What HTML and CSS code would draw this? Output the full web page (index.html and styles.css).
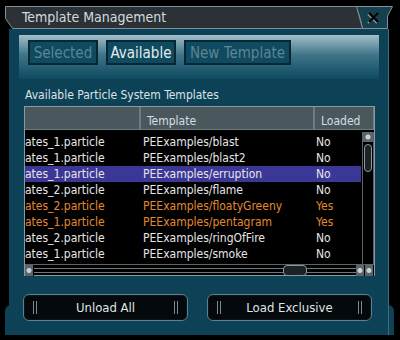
FILE: index.html
```html
<!DOCTYPE html>
<html lang="en">
<head>
    <meta charset="UTF-8">
    <title>Template Management</title>
    <link rel="stylesheet" href="styles.css">
</head>
<body>
    <div class="window">
        <div class="titlebar">
            <div class="title-tab">
                <svg class="tab-shape" width="358" height="23" viewBox="0 0 358 23">
                    <polygon points="0.5,0.5 351.5,0.5 357.5,22.5 7.5,22.5 0.5,12.5" fill="#2b3135" stroke="#7d929c"/>
                </svg>
                <span class="title">Template Management</span>
            </div>
            <div class="close">
                <svg width="38" height="23" viewBox="0 0 38 23">
                    <polygon points="0.5,0.5 37.5,0.5 32.5,10 32.5,22.5 7.5,22.5 4.5,10" fill="#17404f" stroke="#7d929c"/>
                    <path d="M13 8 L22 17 M22 8 L13 17" stroke="#8c9aa0" stroke-width="2"/>
                    <path d="M14 7 L23 16 M23 7 L14 16" stroke="#000" stroke-width="2.4"/>
                </svg>
            </div>
        </div>

        <div class="panel">
            <div class="toolbar">
                <button type="button" class="tab disabled">Selected</button>
                <button type="button" class="tab">Available</button>
                <button type="button" class="tab disabled">New Template</button>
            </div>

            <div class="label">Available Particle System Templates</div>

            <div class="grid">
                <div class="head">
                    <div class="col-file"></div>
                    <div class="col-name">Template</div>
                    <div class="col-loaded">Loaded</div>
                </div>
                <div class="list-area">
                    <div class="rows">
                        <div class="row"><span class="col-file">ates_1.particle</span><span class="col-name">PEExamples/blast</span><span class="col-loaded">No</span></div>
                        <div class="row"><span class="col-file">ates_1.particle</span><span class="col-name">PEExamples/blast2</span><span class="col-loaded">No</span></div>
                        <div class="row selected"><span class="col-file">ates_1.particle</span><span class="col-name">PEExamples/erruption</span><span class="col-loaded">No</span></div>
                        <div class="row"><span class="col-file">ates_2.particle</span><span class="col-name">PEExamples/flame</span><span class="col-loaded">No</span></div>
                        <div class="row loaded"><span class="col-file">ates_2.particle</span><span class="col-name">PEExamples/floatyGreeny</span><span class="col-loaded">Yes</span></div>
                        <div class="row loaded"><span class="col-file">ates_1.particle</span><span class="col-name">PEExamples/pentagram</span><span class="col-loaded">Yes</span></div>
                        <div class="row"><span class="col-file">ates_2.particle</span><span class="col-name">PEExamples/ringOfFire</span><span class="col-loaded">No</span></div>
                        <div class="row"><span class="col-file">ates_1.particle</span><span class="col-name">PEExamples/smoke</span><span class="col-loaded">No</span></div>
                        <div class="row"><span class="col-file">ates_1.particle</span><span class="col-name">PEExamples/test</span><span class="col-loaded">No</span></div>
                    </div>
                    <div class="vscroll">
                        <div class="arrow-up"></div>
                        <div class="vthumb"></div>
                    </div>
                </div>
                <div class="hscroll">
                    <div class="arrow-left"></div>
                    <div class="htrack">
                        <div class="hthumb"></div>
                    </div>
                    <div class="arrow-right"></div>
                    <div class="arrow-right"></div>
                </div>
            </div>

            <div class="actions">
                <button type="button" class="action">Unload All</button>
                <button type="button" class="action">Load Exclusive</button>
            </div>
        </div>
    </div>
</body>
</html>
```

FILE: styles.css
```css
body {
    margin: 0;
    background: #000;
    font-family: "DejaVu Sans Condensed", "DejaVu Sans", Verdana, sans-serif;
    font-stretch: condensed;
    color: #dfe6e9;
}
.window {
    width: 388px;
    margin: 6px 0 0 5px;
}
.titlebar {
    display: flex;
    height: 23px;
}
.title-tab {
    position: relative;
    width: 350px;
    height: 23px;
}
.tab-shape {
    position: absolute;
    left: 0;
    top: 0;
}
.title {
    position: relative;
    display: block;
    padding: 3px 0 0 17px;
    font-size: 14px;
    color: #d3dbde;
}
.close {
    width: 38px;
    height: 23px;
}
.panel {
    position: relative;
    width: 379px;
    height: 300px;
    padding-top: 6px;
    margin-left: 4px;
    background: #0d4156;
    border-right: 1px solid #3f6d7d;
}
.panel::after {
    content: "";
    position: absolute;
    left: -4px;
    right: -6px;
    bottom: 0;
    height: 30px;
    border-radius: 6px 6px 0 0;
    background: #0d4156;
    z-index: -1;
}
.toolbar {
    display: flex;
    gap: 8px;
    margin: 0 9px 0 10px;
    height: 44px;
    padding: 5px 0 0 9px;
    box-sizing: border-box;
    background: linear-gradient(#a3bfca, #3f7589 45%, #0e4a60 100%);
}
.tab {
    height: 25px;
    padding: 0;
    font-family: inherit;
    font-stretch: condensed;
    font-size: 15px;
    white-space: nowrap;
    color: #e4eaec;
    background: #0e4a60;
    border: 2px solid #082733;
}
.tab.disabled {
    color: #5f8492;
}
.tab:nth-child(1),
.tab:nth-child(2) {
    width: 70px;
}
.tab:nth-child(3) {
    width: 107px;
}
.label {
    margin: 9px 0 0 16px;
    height: 16px;
    font-size: 12px;
    color: #dbe3e6;
}
.grid {
    width: 349px;
    height: 168px;
    margin: 2px 0 0 15px;
    background: #000;
    border: 1px solid #8c999e;
}
.head {
    display: flex;
    height: 23px;
    background: #4a585e;
    border-bottom: 1px solid #000;
    font-size: 12px;
    color: #d6dde0;
}
.head > div {
    box-sizing: border-box;
    padding: 7px 0 0 6px;
    border-right: 2px solid #6e7c82;
    border-bottom: 1px solid #6e7c82;
}
.col-file {
    width: 116px;
    flex: none;
    white-space: nowrap;
    overflow: hidden;
}
.col-name {
    width: 174px;
    flex: none;
    white-space: nowrap;
}
.col-loaded {
    flex: 1;
}
.head .col-loaded {
    border-right: 1px solid #6e7c82;
}
.list-area {
    display: flex;
    height: 130px;
    padding-top: 3px;
}
.rows {
    width: 337px;
    overflow: hidden;
}
.row {
    display: flex;
    height: 16px;
    line-height: 16px;
    font-size: 12px;
    color: #e6e6e6;
}
.row .col-name {
    padding-left: 2px;
    width: 172px;
}
.row .col-loaded {
    padding-left: 1px;
}
.row.selected {
    background: #3b3796;
}
.row.loaded {
    color: #e38a2b;
}
.vscroll {
    width: 10px;
    margin: -2px 0 0 1px;
    border-left: 1px solid #5a6468;
    border-right: 1px solid #5a6468;
}
.arrow-up {
    height: 10px;
    background: radial-gradient(circle at 50% 50%, #c8d2d6 0 2px, #59666b 3px);
}
.vthumb {
    height: 26px;
    margin: 2px 1px 0;
    border: 1px solid #8a979c;
    border-radius: 4px;
    background: #1c2326;
}
.hscroll {
    display: flex;
    height: 11px;
    border-top: 1px solid #5a6468;
}
.arrow-left,
.arrow-right {
    width: 8px;
    background: radial-gradient(circle at 50% 50%, #c8d2d6 0 2px, #59666b 3px);
    border-right: 1px solid #000;
}
.htrack {
    position: relative;
    flex: 1;
    margin: 3px 0;
    border-top: 1px solid #6e7a7f;
    border-bottom: 1px solid #6e7a7f;
}
.hthumb {
    position: absolute;
    left: 249px;
    top: -4px;
    width: 22px;
    height: 9px;
    border: 1px solid #8a979c;
    border-radius: 4px;
    background: #1c2326;
}
.actions {
    display: flex;
    gap: 19px;
    margin: 18px 0 0 14px;
}
.action {
    position: relative;
    width: 165px;
    height: 27px;
    font-family: inherit;
    font-stretch: condensed;
    font-size: 13px;
    color: #dfe6e9;
    background: #05090b;
    border: 1px solid #5e8191;
    border-radius: 6px;
    box-shadow: inset 0 0 0 1px #0b1317;
}
.action::before,
.action::after {
    content: "";
    position: absolute;
    top: 6px;
    width: 2px;
    height: 13px;
    border-left: 1px solid #7a8a90;
    border-right: 1px solid #7a8a90;
}
.action::before {
    left: 9px;
}
.action::after {
    right: 9px;
}
```
